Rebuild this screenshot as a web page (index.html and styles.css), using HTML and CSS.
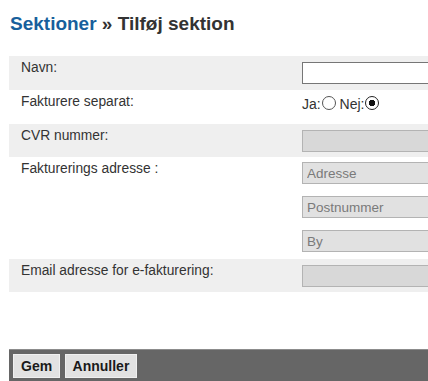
FILE: index.html
```html
<!DOCTYPE html>
<html lang="da">
<head>
    <meta charset="UTF-8">
    <title>Tilføj sektion</title>
    <link rel="stylesheet" href="styles.css">
</head>
<body>
    <div class="page">
        <h1 class="title"><a href="#">Sektioner</a> &raquo; Tilføj sektion</h1>
        <table class="form-table">
            <tr class="odd">
                <td class="label">Navn:</td>
                <td><input type="text" class="field"></td>
            </tr>
            <tr>
                <td class="label">Fakturere separat:</td>
                <td class="radios">Ja:<input type="radio" name="sep"> Nej:<input type="radio" name="sep" checked></td>
            </tr>
            <tr class="odd short">
                <td class="label">CVR nummer:</td>
                <td><input type="text" class="field disabled" disabled></td>
            </tr>
            <tr class="tall">
                <td class="label">Fakturerings adresse :</td>
                <td class="stack">
                    <input type="text" class="field soft" placeholder="Adresse" disabled>
                    <input type="text" class="field soft" placeholder="Postnummer" disabled>
                    <input type="text" class="field soft" placeholder="By" disabled>
                </td>
            </tr>
            <tr class="odd short">
                <td class="label">Email adresse for e-fakturering:</td>
                <td><input type="text" class="field disabled" disabled></td>
            </tr>
        </table>
        <div class="footer">
            <button class="btn">Gem</button>
            <button class="btn">Annuller</button>
        </div>
    </div>
</body>
</html>
```

FILE: styles.css
```css
body {
    margin: 0;
    font-family: "Liberation Sans", Arial, sans-serif;
    color: #333;
    overflow: hidden;
}
.page {
    margin-left: 9px;
    width: 640px;
}
.title {
    margin: 0;
    padding: 13px 0 0 1px;
    height: 56px;
    box-sizing: border-box;
    font-size: 19px;
    font-weight: bold;
    color: #333;
}
.title a {
    color: #175f9c;
    text-decoration: none;
}
.form-table {
    width: 100%;
    border-collapse: collapse;
}
.form-table td {
    box-sizing: border-box;
    padding: 0;
    height: 34px;
    font-size: 14px;
    vertical-align: middle;
}
.form-table tr.odd {
    background-color: #efefef;
}
.form-table tr.short td {
    height: 33px;
}
.form-table tr.tall td {
    height: 102px;
}
.form-table td.label {
    width: 293px;
    padding: 4px 0 0 12px;
    vertical-align: top;
    font-size: 13.8px;
}
.form-table td.stack {
    vertical-align: top;
    padding-top: 5px;
}
.field {
    display: block;
    box-sizing: border-box;
    width: 200px;
    height: 22px;
    margin: 0;
    border: 1px solid #767676;
    background: #fff;
    font-family: "Liberation Sans", Arial, sans-serif;
    font-size: 13.5px;
    padding: 1px 4px;
}
.field.disabled {
    background: #d8d8d8;
    border-color: #b3b3b3;
}
.field.soft {
    background: #e1e1e1;
    border-color: #b3b3b3;
    margin-bottom: 12px;
}
.field.soft:last-child {
    margin-bottom: 0;
}
.field.soft::placeholder {
    color: #7a7a7a;
}
.form-table td.radios {
    font-size: 14px;
    vertical-align: top;
    padding-top: 6px;
}
.radios input {
    appearance: none;
    box-sizing: border-box;
    width: 14px;
    height: 14px;
    margin: 0 0 0 1px;
    border: 1px solid #555;
    border-radius: 50%;
    background: #fff;
    vertical-align: -1px;
}
.radios input:checked {
    border-color: #222;
    background: radial-gradient(circle, #111 0 3px, #fff 3.5px);
}
.footer {
    margin-top: 57px;
    height: 40px;
    background-color: #666;
    border-top: 1px solid #8c8c8c;
    padding: 4px 0 0 4px;
    box-sizing: border-box;
}
.btn {
    height: 24px;
    padding: 0 7px;
    margin: 0;
    background: #e2e2e2;
    border: 1px solid #f0f0f0;
    font-family: "Liberation Sans", Arial, sans-serif;
    font-size: 14px;
    font-weight: bold;
    color: #1a1a1a;
}
```
